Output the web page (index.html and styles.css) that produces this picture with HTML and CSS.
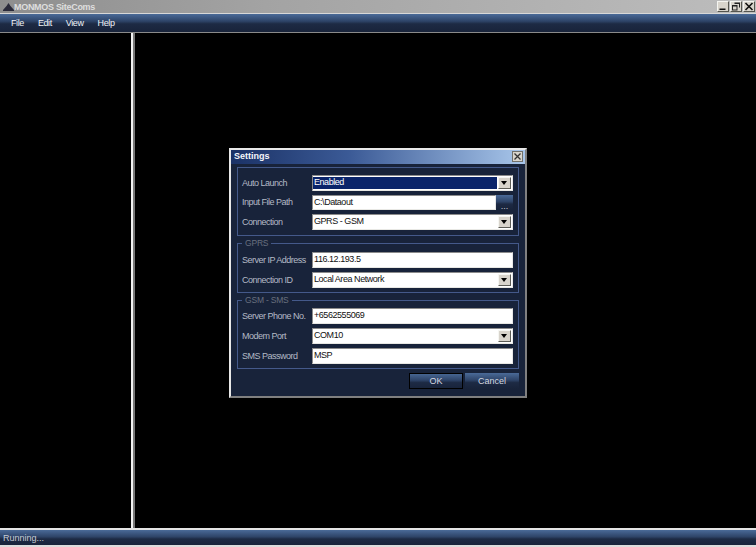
FILE: index.html
```html
<!DOCTYPE html>
<html lang="en">
<head>
    <meta charset="UTF-8">
    <title>MONMOS SiteComs</title>
    <link rel="stylesheet" href="styles.css">
</head>
<body>
    <div class="window">
        <div class="titlebar">
            <svg class="app-icon" width="11" height="8" viewBox="0 0 11 8"><path d="M5.500 0 7.500 3 11 7V8H0V7L3.500 3Z" fill="#2a2a3a"/></svg>
            <span class="app-title">MONMOS SiteComs</span>
            <div class="win-buttons">
                <span class="win-btn"><svg width="10" height="9" viewBox="0 0 10 9"><path d="M1.500 6.500h6V8h-6z" fill="#111"/></svg></span>
                <span class="win-btn"><svg width="10" height="9" viewBox="0 0 10 9"><path d="M3.500 0.500h5.500v5H8V2H3.500zM1 3h5.500v5.500H1zM2 4.500V7.500h3.500V4.500z" fill="#222" fill-rule="evenodd"/></svg></span>
                <span class="win-btn"><svg width="10" height="9" viewBox="0 0 10 9"><path d="M1.500 1 8.500 8M8.500 1 1.500 8" stroke="#111" stroke-width="1.600"/></svg></span>
            </div>
        </div>

        <div class="menubar">
            <span class="menu-item">File</span>
            <span class="menu-item">Edit</span>
            <span class="menu-item">View</span>
            <span class="menu-item">Help</span>
        </div>

        <div class="panes">
            <div class="pane-left"></div>
            <div class="pane-right"></div>
        </div>

        <div class="statusbar">Running...</div>
    </div>

    <!-- Settings dialog -->
    <div class="dialog">
        <div class="dialog-title">
            <span>Settings</span>
            <span class="dialog-close"><svg width="7" height="7" viewBox="0 0 7 7"><path d="M0.500 0.500 6.500 6.500M6.500 0.500 0.500 6.500" stroke="#333" stroke-width="1.300"/></svg></span>
        </div>
        <div class="dialog-body">
            <div class="group group-first">
                <div class="row">
                    <label>Auto Launch</label>
                    <div class="combo combo-selected"><span>Enabled</span><span class="combo-arrow"></span></div>
                </div>
                <div class="row">
                    <label>Input File Path</label>
                    <div class="path-field">
                        <div class="field">C:\Dataout</div>
                        <div class="browse">...</div>
                    </div>
                </div>
                <div class="row">
                    <label>Connection</label>
                    <div class="combo"><span>GPRS - GSM</span><span class="combo-arrow"></span></div>
                </div>
            </div>

            <div class="group group-gprs">
                <span class="legend">GPRS</span>
                <div class="row">
                    <label>Server IP Address</label>
                    <div class="field">116.12.193.5</div>
                </div>
                <div class="row">
                    <label>Connection ID</label>
                    <div class="combo"><span>Local Area Network</span><span class="combo-arrow"></span></div>
                </div>
            </div>

            <div class="group group-gsm">
                <span class="legend">GSM - SMS</span>
                <div class="row">
                    <label>Server Phone No.</label>
                    <div class="field">+6562555069</div>
                </div>
                <div class="row">
                    <label>Modem Port</label>
                    <div class="combo"><span>COM10</span><span class="combo-arrow"></span></div>
                </div>
                <div class="row">
                    <label>SMS Password</label>
                    <div class="field">MSP</div>
                </div>
            </div>

            <div class="dialog-buttons">
                <button class="btn btn-default">OK</button>
                <button class="btn">Cancel</button>
            </div>
        </div>
    </div>
</body>
</html>
```

FILE: styles.css
```css
html, body {
    margin: 0;
    padding: 0;
    background-color: #000;
}
body {
    width: 756px;
    height: 547px;
    overflow: hidden;
    position: relative;
    font-family: "Liberation Sans", Arial, sans-serif;
    font-size: 9px;
}
.window {
    display: flex;
    flex-direction: column;
    height: 547px;
}

/* title bar */
.titlebar {
    height: 13px;
    flex: none;
    display: flex;
    align-items: center;
    padding-left: 3px;
    background: linear-gradient(to right, #8e8e8e, #a3a3a3 35%, #bdbdbd);
    border-bottom: 1px solid #d8d8d8;
}
.app-title {
    font-size: 9px;
    font-weight: bold;
    color: #dedede;
    letter-spacing: -0.300px;
}
.win-buttons {
    margin-left: auto;
    display: flex;
    gap: 1px;
    margin-right: 1px;
}
.win-btn {
    width: 12px;
    height: 11px;
    box-sizing: border-box;
    display: flex;
    align-items: center;
    justify-content: center;
    background-color: #d8d4cc;
    border: 1px solid;
    border-color: #f4f4f0 #55554f #55554f #f4f4f0;
}

/* menu */
.menubar {
    height: 18px;
    flex: none;
    display: flex;
    align-items: center;
    padding-left: 11px;
    gap: 14px;
    color: #f0f2f6;
    font-size: 9px;
    letter-spacing: -0.400px;
    background: linear-gradient(to bottom, #4a6a98, #2e4468 40%, #1d2a44 55%, #18233a);
    border-bottom: 1px solid #8a8a8a;
}

/* panes */
.panes {
    flex: 1;
    display: flex;
    background-color: #777;
    min-height: 0;
    border-bottom: 2px solid #e4e4e4;
}
.pane-left {
    width: 131px;
    margin-right: 1px;
    background-color: #000;
    border-right: 2px solid #f2f2f2;
}
.pane-right {
    flex: 1;
    margin-left: 1px;
    background-color: #000;
}

.statusbar {
    height: 15px;
    flex: none;
    padding-left: 3px;
    line-height: 16px;
    font-size: 9px;
    color: #c8ccd4;
    background: linear-gradient(to bottom, #4a6a98, #2e4468 45%, #1d2a44 60%, #18233a);
    border-bottom: 2px solid #dcdcdc;
}

/* dialog */
.dialog {
    position: absolute;
    left: 229px;
    top: 148px;
    width: 294px;
    height: 246px;
    background-color: #18233a;
    border: 2px solid;
    border-color: #e8e8e8 #808080 #808080 #e8e8e8;
    color: #b4bac6;
}
.dialog-title {
    height: 12px;
    display: flex;
    align-items: center;
    justify-content: space-between;
    padding: 0 2px 2px 3px;
    font-size: 9px;
    font-weight: bold;
    color: #f4f6fa;
    background: linear-gradient(to right, #1b3266, #3b5a96 40%, #a8c6ea);
}
.dialog-close {
    width: 9px;
    height: 9px;
    display: flex;
    align-items: center;
    justify-content: center;
    background-color: #d8d4cc;
    border: 1px solid #70706a;
}
.dialog-body {
    padding: 3px 6px 0 6px;
}
.group {
    position: relative;
    border: 1px solid #44598a;
    padding: 0 5px 0 4px;
    display: flex;
    flex-direction: column;
    gap: 4px;
}
.group-first {
    padding-top: 7px;
    height: 60px;
}
.group-first .row {
    height: 15.500px;
}
.group-gprs {
    margin-top: 7px;
    padding-top: 8px;
    height: 40px;
}
.group-gsm {
    margin-top: 7px;
    padding-top: 7px;
    height: 60px;
}
.legend {
    position: absolute;
    left: 4px;
    top: -6px;
    padding: 0 3px;
    font-size: 8.500px;
    letter-spacing: -0.200px;
    line-height: 11px;
    color: #68707f;
    background-color: #18233a;
}
.row {
    display: flex;
    align-items: center;
    height: 16px;
}
.row label {
    width: 70px;
    flex: none;
    font-size: 9px;
    letter-spacing: -0.500px;
    color: #b4bac6;
    white-space: nowrap;
}
.field, .combo {
    flex: 1;
    box-sizing: border-box;
    height: 100%;
    padding-left: 1px;
    background-color: #fff;
    color: #111;
    font-size: 9px;
    letter-spacing: -0.450px;
    line-height: 13px;
    border: 1px solid;
    border-color: #8c8c8c #e8e8e8 #e8e8e4 #8c8c8c;
    white-space: nowrap;
}
.combo {
    display: flex;
    justify-content: space-between;
    padding-right: 1px;
}
.combo-arrow {
    width: 13px;
    height: 12px;
    margin-top: 1px;
    box-sizing: border-box;
    background-color: #d8d4cc;
    border: 1px solid;
    border-color: #f6f6f2 #5c5c56 #5c5c56 #f6f6f2;
    position: relative;
}
.combo-arrow::after {
    content: "";
    position: absolute;
    left: 2px;
    top: 3px;
    border: 3px solid transparent;
    border-top: 4px solid #000;
    border-bottom: 0;
}
.combo-selected span:first-child {
    flex: 1;
    background-color: #0a246a;
    color: #fff;
    margin: 1px 1px 1px -1px;
    padding-left: 1px;
    line-height: 11px;
}
.path-field {
    flex: 1;
    display: flex;
    height: 100%;
}
.browse {
    width: 17px;
    flex: none;
    color: #c8ccd4;
    font-size: 9px;
    line-height: 23px;
    overflow: hidden;
    text-align: center;
    background: linear-gradient(to bottom, #4a6a98, #2e4468 45%, #1d2a44 60%, #18233a);
}
.dialog-buttons {
    display: flex;
    justify-content: flex-end;
    gap: 2px;
    margin-top: 4px;
}
.btn {
    width: 54px;
    height: 16px;
    padding: 0;
    font-family: "Liberation Sans", Arial, sans-serif;
    font-size: 9px;
    color: #d4d8e0;
    border: none;
    background: linear-gradient(to bottom, #4a6a98, #2e4468 45%, #1d2a44 60%, #18233a);
}
.btn-default {
    outline: 1px solid #000;
    outline-offset: -1px;
}
```
